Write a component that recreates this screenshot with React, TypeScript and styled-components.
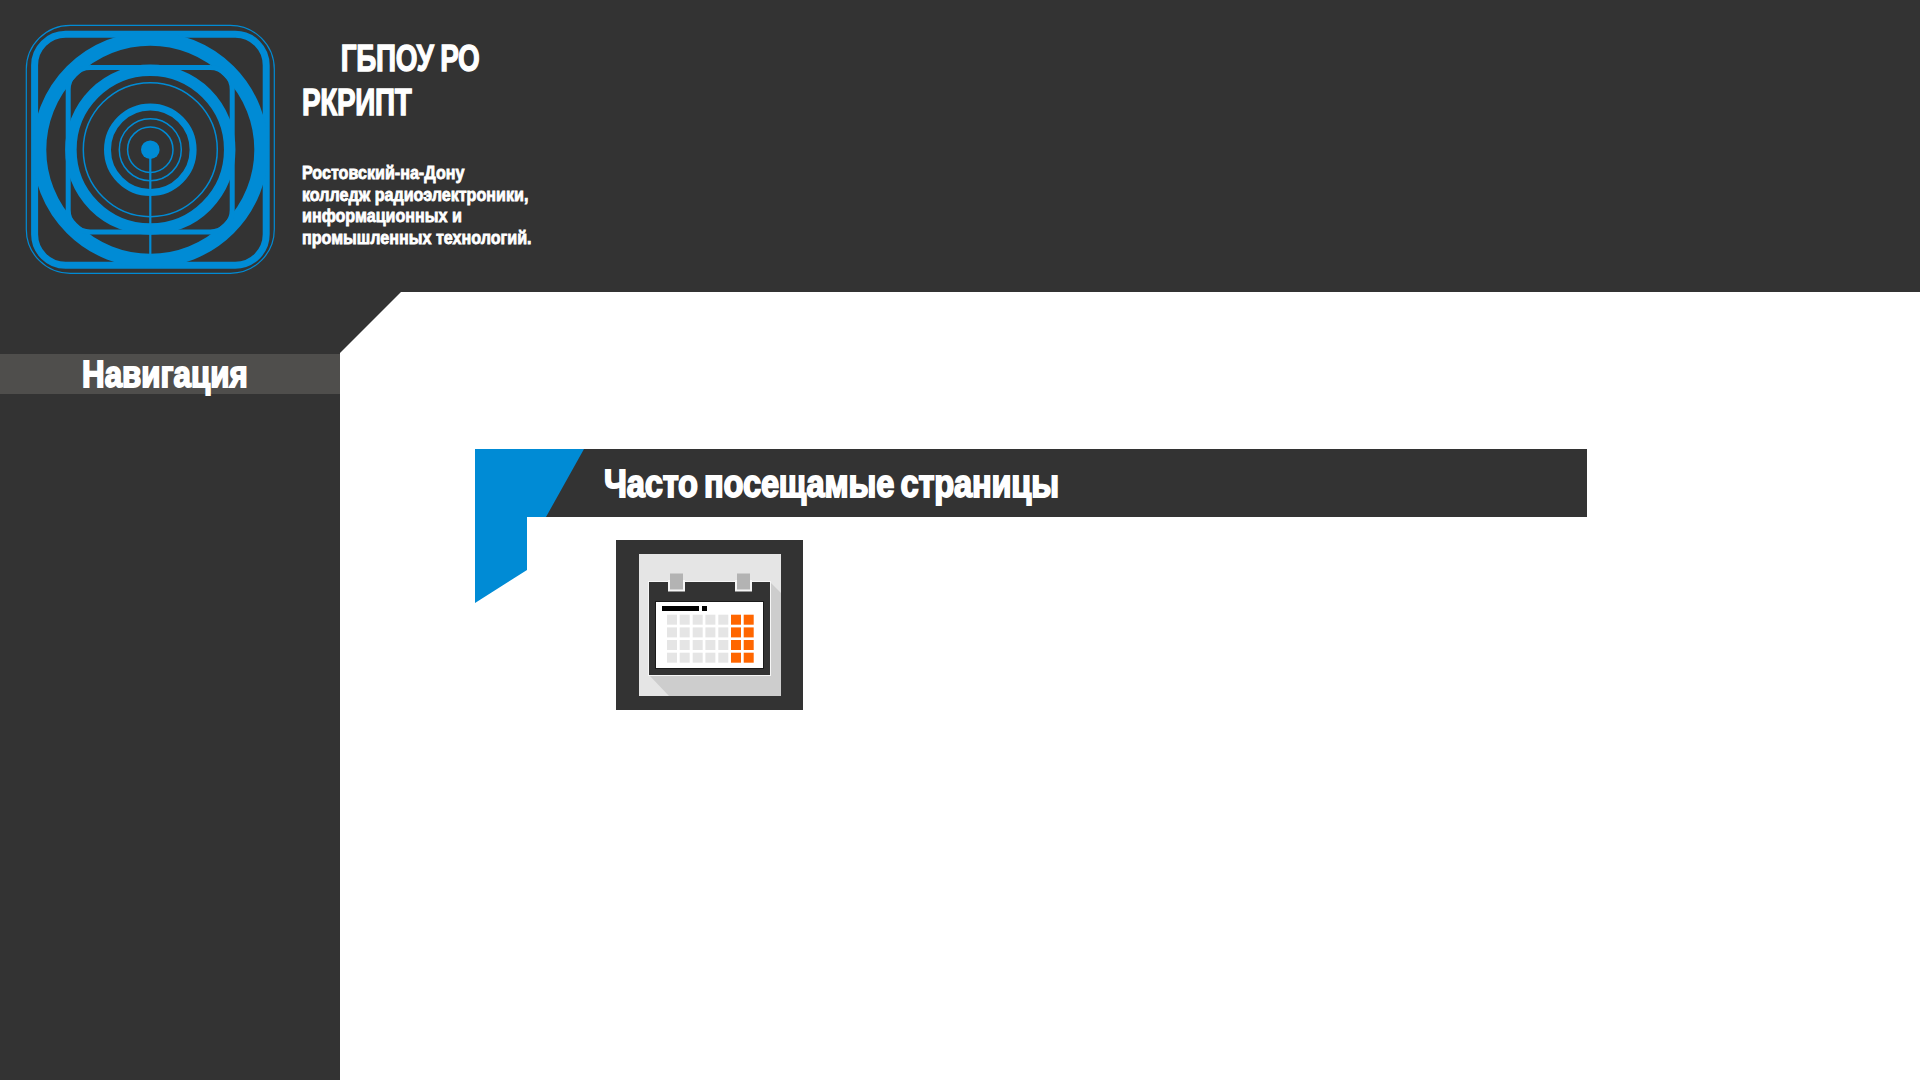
import React from "react";
import styled, { createGlobalStyle } from "styled-components";

const Global = createGlobalStyle`
  html, body { margin: 0; padding: 0; height: 100%; background: #333333; overflow: hidden; }
  #root { height: 100%; }
`;

const heavy = `"Liberation Sans", Arial, sans-serif`;

const Page = styled.div`
  height: 1080px;
  display: flex;
  flex-direction: column;
  background: #333333;
  font-family: ${heavy};
  font-weight: 700;
  color: #ffffff;
`;

const Header = styled.header`
  height: 292px;
  flex: none;
  display: flex;
  align-items: flex-start;
  padding: 24px 0 0 25px;
  box-sizing: border-box;
`;

const Logo = styled.svg`
  width: 252px;
  height: 252px;
  flex: none;
`;

const Brand = styled.div`
  margin: 13px 0 0 25px;
  width: 250px;
`;

const BrandName = styled.h1`
  margin: 0;
  font-size: 36px;
  line-height: 44px;
  font-weight: 700;
  text-indent: 50px;
  letter-spacing: -0.4px;
  word-spacing: -1px;
  transform: scaleX(0.775);
  transform-origin: left center;
  -webkit-text-stroke: 1.3px #ffffff;
`;

const BrandText = styled.p`
  margin: 38px 0 0;
  font-size: 18px;
  line-height: 21.7px;
  font-weight: 700;
  transform: scaleX(0.895);
  transform-origin: left center;
  -webkit-text-stroke: 0.8px #ffffff;
  white-space: nowrap;
`;

const Body = styled.div`
  flex: 1;
  display: flex;
  min-height: 0;
`;

const Sidebar = styled.aside`
  width: 340px;
  flex: none;
  padding-top: 62px;
  box-sizing: border-box;
`;

const NavTitle = styled.div`
  height: 40px;
  background: #4f4e4c;
  display: flex;
  justify-content: center;
  padding-right: 11px;
`;

const NavLabel = styled.span`
  font-size: 37px;
  line-height: 41px;
  transform: scaleX(0.846);
  -webkit-text-stroke: 1.8px #ffffff;
  white-space: nowrap;
`;

const Main = styled.main`
  flex: 1;
  background: #ffffff;
  clip-path: polygon(61px 0, 100% 0, 100% 100%, 0 100%, 0 61px);
  padding: 157px 0 0 135px;
  box-sizing: border-box;
`;

const Banner = styled.div`
  position: relative;
  width: 1112px;
  height: 68px;
  background: #333333;
  padding-left: 129px;
  box-sizing: border-box;

  &::before {
    content: "";
    position: absolute;
    left: 0;
    top: 0;
    width: 109px;
    height: 154px;
    background: #008bd5;
    clip-path: polygon(0 0, 109px 0, 71px 68px, 52px 68px, 52px 121px, 0 154px);
  }
`;

const BannerTitle = styled.h2`
  position: relative;
  display: inline-block;
  margin: 0;
  font-size: 38px;
  line-height: 71px;
  font-weight: 700;
  color: #ffffff;
  letter-spacing: -0.2px;
  word-spacing: -3px;
  transform: scaleX(0.858);
  transform-origin: left center;
  -webkit-text-stroke: 1.8px #ffffff;
  white-space: nowrap;
`;

const Tile = styled.div`
  width: 187px;
  height: 170px;
  margin: 23px 0 0 141px;
  background: #333333;
  display: flex;
  align-items: center;
  justify-content: center;
`;

const CalendarArt = styled.svg`
  width: 142px;
  height: 142px;
  display: block;
`;

const blue = "#008bd5";

const LogoMark = () => (
  <Logo viewBox="25 24 252 252" aria-hidden="true">
    <g fill="none" stroke={blue}>
      <rect x="26.3" y="25.3" width="248" height="248" rx="44" strokeWidth="1.2" />
      <rect x="34.6" y="34.3" width="231.6" height="231" rx="31" strokeWidth="7" />
      <circle cx="150.3" cy="149.7" r="111" strokeWidth="14" />
      <rect x="68.2" y="67.5" width="164" height="164.4" rx="22" strokeWidth="5" />
      <circle cx="150.3" cy="149.7" r="79.4" strokeWidth="11.5" />
      <circle cx="150.3" cy="149.7" r="67" strokeWidth="1.5" />
      <circle cx="150.3" cy="149.7" r="42.8" strokeWidth="7" />
      <circle cx="150.3" cy="149.7" r="31" strokeWidth="1.5" />
      <circle cx="150.3" cy="149.7" r="22.7" strokeWidth="1.5" />
      <line x1="150.3" y1="150" x2="150.3" y2="254" strokeWidth="2.2" />
    </g>
    <circle cx="150.3" cy="149.7" r="9.3" fill={blue} />
  </Logo>
);

const columns = [28, 40.7, 53.7, 66.4, 79.3, 92, 104.7];
const rows = [60.7, 73.4, 86, 98.7];

const CalendarIcon = () => (
  <CalendarArt viewBox="0 0 142 142" aria-hidden="true">
    <rect width="142" height="142" fill="#e5e5e5" />
    <polygon points="131,28 142,39 142,142 30,142 10,121" fill="#cdcdcd" />
    <rect x="9.5" y="27.5" width="122" height="94" fill="#333333" stroke="#f6f6f6" strokeWidth="1" />
    <rect x="29" y="26" width="17" height="11.5" fill="#f6f6f6" />
    <rect x="96" y="26" width="17" height="11.5" fill="#f6f6f6" />
    <rect x="31" y="19.5" width="13" height="16" fill="#b3b3b3" />
    <rect x="98" y="19.5" width="13" height="16" fill="#b3b3b3" />
    <rect x="16.5" y="47.5" width="108" height="67" fill="#ffffff" stroke="#1a1a1a" strokeWidth="1" />
    <rect x="23" y="52" width="37" height="5" fill="#000000" />
    <rect x="63" y="52" width="5" height="5" fill="#000000" />
    {rows.map((y) =>
      columns.map((x, i) => (
        <rect key={`${x}-${y}`} x={x} y={y} width="10" height="10" fill={i > 4 ? "#ff6600" : "#e5e5e5"} />
      ))
    )}
  </CalendarArt>
);

export default function App() {
  return (
    <Page>
      <Global />
      <Header>
        <LogoMark />
        <Brand>
          <BrandName>ГБПОУ РО РКРИПТ</BrandName>
          <BrandText>
            Ростовский-на-Дону
            <br />
            колледж радиоэлектроники,
            <br />
            информационных и
            <br />
            промышленных технологий.
          </BrandText>
        </Brand>
      </Header>
      <Body>
        <Sidebar>
          <NavTitle>
            <NavLabel>Навигация</NavLabel>
          </NavTitle>
        </Sidebar>
        <Main>
          <Banner>
            <BannerTitle>Часто посещамые страницы</BannerTitle>
          </Banner>
          <Tile>
            <CalendarIcon />
          </Tile>
        </Main>
      </Body>
    </Page>
  );
}
